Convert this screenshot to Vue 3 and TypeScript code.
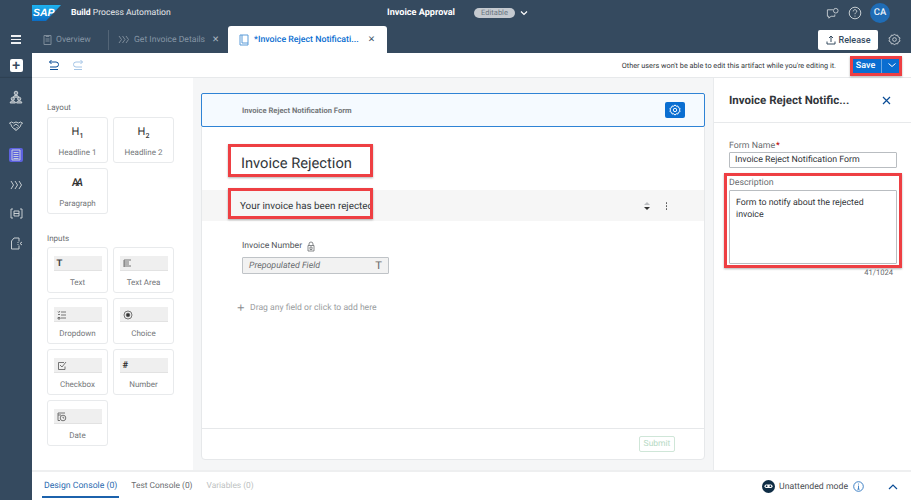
<script setup lang="ts">
interface PaletteItem {
  label: string;
  icon: string;
}

const layoutItems = ["Headline 1", "Headline 2", "Paragraph"];

const inputItems: PaletteItem[] = [
  { label: "Text", icon: "text" },
  { label: "Text Area", icon: "area" },
  { label: "Dropdown", icon: "list" },
  { label: "Choice", icon: "radio" },
  { label: "Checkbox", icon: "check" },
  { label: "Number", icon: "hash" },
  { label: "Date", icon: "date" },
];

// red annotation frames drawn on top of the screenshot
const marks = [
  { left: 850, top: 56, width: 52, height: 20 },
  { left: 228, top: 144, width: 145, height: 33 },
  { left: 228, top: 188, width: 145, height: 31 },
  { left: 724, top: 173, width: 178, height: 95 },
];
</script>

<template>
  <div class="page">
    <header class="shell">
      <div class="shell-top">
        <div class="logo">
          <svg width="30" height="16" viewBox="0 0 30 16">
            <defs>
              <linearGradient id="sapg" x1="0" y1="0" x2="0" y2="1">
                <stop offset="0" stop-color="#1eb3f0" />
                <stop offset="1" stop-color="#0a6cc4" />
              </linearGradient>
            </defs>
            <polygon points="0,0 29,0 14,16 0,16" fill="url(#sapg)" />
          </svg>
          <span class="logo-text">SAP</span>
        </div>
        <div class="product"><b>Build</b> Process Automation</div>
        <div class="project">
          <b>Invoice Approval</b>
          <span class="pill">Editable</span>
          <svg width="10" height="10" viewBox="0 0 10 10" class="caret"><path d="M2 3.5 5 6.5 8 3.5" /></svg>
        </div>
        <div class="shell-actions">
          <svg width="13" height="13" viewBox="0 0 14 14" class="line-icon">
            <path d="M7.5 3H1.5V10H3V12L5.5 10H9.5V8" />
            <circle cx="10.5" cy="4" r="2.5" />
          </svg>
          <svg width="14" height="14" viewBox="0 0 14 14" class="line-icon">
            <circle cx="7" cy="7" r="5.8" />
            <path d="M5.2 5.4C5.2 4.3 6 3.7 7 3.7S8.8 4.4 8.8 5.3C8.8 6.5 7 6.6 7 8.2M7 9.6V10.6" />
          </svg>
          <span class="avatar">CA</span>
        </div>
      </div>
      <div class="shell-tabs">
        <span class="hamburger"><i></i><i></i><i></i></span>
        <div class="tab muted first">
          <svg width="9" height="11" viewBox="0 0 9 11" class="tab-icon"><path d="M1 1.5H8V10.5H1ZM3 1V2.5H6V1M2.5 5H6.5M2.5 7H6.5" /></svg>
          Overview
        </div>
        <div class="tab muted second">
          <svg width="12" height="9" viewBox="0 0 12 9" class="tab-icon"><path d="M1 1 3.5 4.5 1 8M4.5 1 7 4.5 4.5 8M8 1 10.5 4.5 8 8" /></svg>
          Get Invoice Details
          <span class="tab-x">✕</span>
        </div>
        <div class="tab active">
          <svg width="10" height="12" viewBox="0 0 10 12" class="tab-icon blue"><path d="M1 1H9V11H1ZM3 1V9H9" /></svg>
          *Invoice Reject Notificati...
          <span class="tab-x">✕</span>
        </div>
        <button class="release">
          <svg width="10" height="10" viewBox="0 0 10 10" class="release-icon"><path d="M5 7V1M3 3 5 1 7 3M1 6.5V9H9V6.5" /></svg>
          Release
        </button>
        <svg width="13" height="13" viewBox="0 0 14 14" class="line-icon tabs-gear">
          <circle cx="7" cy="7" r="2" />
          <path d="M7 1 8.3 2.6 10.4 2.3 11 4.3 13 5.3 12.2 7 13 8.7 11 9.7 10.4 11.7 8.3 11.4 7 13 5.7 11.4 3.6 11.7 3 9.7 1 8.7 1.8 7 1 5.3 3 4.3 3.6 2.3 5.7 2.6Z" />
        </svg>
      </div>
    </header>

    <div class="body">
      <nav class="rail">
        <span class="plus">+</span>
        <div class="rail-icons">
          <svg width="14" height="14" viewBox="0 0 14 14" class="line-icon people">
            <circle cx="7" cy="3" r="1.8" />
            <path d="M4.5 7.2C4.5 5.8 5.5 5.4 7 5.4S9.5 5.8 9.5 7.2Z" />
            <circle cx="3.8" cy="8.8" r="1.6" />
            <circle cx="10.2" cy="8.8" r="1.6" />
            <path d="M1.2 13C1.2 11.4 2.2 11 3.8 11S6.4 11.4 6.4 13ZM7.6 13C7.6 11.4 8.6 11 10.2 11S12.8 11.4 12.8 13Z" />
          </svg>
          <svg width="16" height="12" viewBox="0 0 16 12" class="line-icon">
            <path d="M1 3.5 3.5 2 5.5 3 8 2 10.5 3 12.5 2 15 3.5M2.5 3.5 4 7 8 10.5 12 7 13.5 3.5M5.5 6 8 4 11 6.5M6.5 8 8 9.5M8.5 7 10 8.5" />
          </svg>
          <span class="rail-active">
            <svg width="10" height="12" viewBox="0 0 10 12" class="line-icon"><path d="M1 1H9V11H1ZM2.5 3.5H7.5M2.5 5.5H7.5M2.5 7.5H7.5M2.5 9.5H7.5" /></svg>
          </span>
          <svg width="13" height="10" viewBox="0 0 13 10" class="line-icon"><path d="M1 1 3.5 5 1 9M5 1 7.5 5 5 9M9 1 11.5 5 9 9" /></svg>
          <svg width="13" height="11" viewBox="0 0 13 11" class="line-icon"><path d="M3 1H1V10H3M10 1H12V10H10M4 3H9V8H4ZM4 5.5H9" /></svg>
          <svg width="13" height="13" viewBox="0 0 13 13" class="line-icon"><path d="M9 1H4L1.5 4V12H9V8.5M9 1V4.5M12 5 10 6.5 12 8M7.5 5.5H8.5M7.5 7.5H8.5" /></svg>
        </div>
      </nav>

      <div class="workspace">
        <div class="toolbar">
          <svg width="12" height="12" viewBox="0 0 12 12" class="undo"><path d="M3.5 1 1.5 3 3.5 5M1.5 3H8A2.5 2.5 0 0 1 8 8H2M2 10.5H10" /></svg>
          <svg width="12" height="12" viewBox="0 0 12 12" class="undo faded"><path d="M8.5 1 10.5 3 8.5 5M10.5 3H4A2.5 2.5 0 0 0 4 8H10M2 10.5H10" /></svg>
          <span class="notice">Other users won't be able to edit this artifact while you're editing it.</span>
          <div class="save">
            <span class="save-main">Save</span>
            <span class="save-menu">
              <svg width="10" height="10" viewBox="0 0 10 10"><path d="M1.5 3.5 5 6.5 8.5 3.5" /></svg>
            </span>
          </div>
        </div>

        <div class="editor">
          <aside class="palette">
            <div class="group-title">Layout</div>
            <div class="palette-grid">
              <div v-for="(item, i) in layoutItems" :key="item" class="palette-card">
                <div v-if="i < 2" class="heading-glyph">H<sub>{{ i + 1 }}</sub></div>
                <div v-else class="para-glyph">A<i>A</i></div>
                <span>{{ item }}</span>
              </div>
            </div>
            <div class="group-title inputs-title">Inputs</div>
            <div class="palette-grid">
              <div v-for="item in inputItems" :key="item.label" class="palette-card input-card">
                <div class="field-thumb">
                  <span v-if="item.icon === 'text'" class="thumb-t">T</span>
                  <svg v-else-if="item.icon === 'area'" width="9" height="9" viewBox="0 0 9 9" class="thumb-icon"><path d="M1 1H8M1 3H6M1 5H6M1 7H8M1 1V8" /></svg>
                  <svg v-else-if="item.icon === 'list'" width="10" height="10" viewBox="0 0 10 10" class="thumb-icon"><path d="M4 2H9M4 5H9M4 8H9M1 1.5 1.8 2.5 3 1M1 4.5H3M1 7.5H3V9H1Z" /></svg>
                  <svg v-else-if="item.icon === 'radio'" width="10" height="10" viewBox="0 0 10 10" class="thumb-icon"><circle cx="5" cy="5" r="4" /><circle cx="5" cy="5" r="1.8" fill="#333" /></svg>
                  <svg v-else-if="item.icon === 'check'" width="10" height="10" viewBox="0 0 10 10" class="thumb-icon"><path d="M8 5.5V8.5H1.5V1.5H7M3 4 5 6 9 1" /></svg>
                  <span v-else-if="item.icon === 'hash'" class="thumb-hash">#</span>
                  <svg v-else width="10" height="11" viewBox="0 0 10 11" class="thumb-icon"><path d="M1 2H8M1 2V9.5H3M1 4H4" /><circle cx="6" cy="7" r="2.8" /><path d="M6 5.7V7H7.2" /></svg>
                </div>
                <span>{{ item.label }}</span>
              </div>
            </div>
          </aside>

          <main class="canvas">
            <div class="form-card">
              <div class="form-head">
                <span>Invoice Reject Notification Form</span>
                <span class="gear-btn">
                  <svg width="12" height="12" viewBox="0 0 14 14">
                    <circle cx="7" cy="7" r="2" />
                    <path d="M7 1 8.3 2.6 10.4 2.3 11 4.3 13 5.3 12.2 7 13 8.7 11 9.7 10.4 11.7 8.3 11.4 7 13 5.7 11.4 3.6 11.7 3 9.7 1 8.7 1.8 7 1 5.3 3 4.3 3.6 2.3 5.7 2.6Z" />
                  </svg>
                </span>
              </div>
              <div class="form-body">
                <h1>Invoice Rejection</h1>
                <div class="para-row">
                  <span class="para-text">Your invoice has been rejected</span>
                  <span class="row-tools">
                    <span class="updown"><i class="up"></i><i class="down"></i></span>
                    <span class="dots"><i></i><i></i><i></i></span>
                  </span>
                </div>
                <div class="field">
                  <div class="field-label">
                    Invoice Number
                    <svg width="8" height="11" viewBox="0 0 8 11" class="lock"><path d="M2 4.5V3A2 2 0 0 1 6 3V4.5M1 4.5H7V10H1ZM3 6H5V8.5H3Z" /></svg>
                  </div>
                  <div class="prefill">
                    <em>Prepopulated Field</em>
                    <span class="prefill-t">T</span>
                  </div>
                </div>
                <div class="dropzone"><span class="dz-plus">+</span>Drag any field or click to add here</div>
              </div>
              <div class="form-foot"><span class="submit">Submit</span></div>
            </div>
          </main>

          <aside class="props">
            <div class="props-head">
              <span>Invoice Reject Notific...</span>
              <svg width="9" height="9" viewBox="0 0 9 9" class="close"><path d="M1 1 8 8M8 1 1 8" /></svg>
            </div>
            <div class="props-body">
              <label>Form Name<span class="req">*</span></label>
              <div class="text-input">Invoice Reject Notification Form</div>
              <label class="desc-label">Description</label>
              <div class="text-area">Form to notify about the rejected invoice</div>
              <div class="count">41/1024</div>
            </div>
          </aside>
        </div>

        <footer class="console">
          <span class="console-tab on">Design Console (0)</span>
          <span class="console-tab">Test Console (0)</span>
          <span class="console-tab off">Variables (0)</span>
          <div class="console-right">
            <svg width="13" height="13" viewBox="0 0 13 13" class="bot">
              <circle cx="6.5" cy="6.5" r="6.5" fill="#0f2d45" />
              <rect x="2.5" y="4.5" width="8" height="3.5" rx="1.7" fill="#fff" />
              <circle cx="4.6" cy="6.2" r="0.9" fill="#0f2d45" />
              <circle cx="8.4" cy="6.2" r="0.9" fill="#0f2d45" />
            </svg>
            <span>Unattended mode</span>
            <svg width="11" height="11" viewBox="0 0 11 11" class="info"><circle cx="5.5" cy="5.5" r="4.8" /><path d="M5.5 4.6V8.2M4.4 8.2H6.6M5.5 2.6V3.5" /></svg>
            <svg width="10" height="7" viewBox="0 0 10 7" class="chevron"><path d="M1 6 5 2 9 6" /></svg>
          </div>
        </footer>
      </div>
    </div>

    <div
      v-for="(m, i) in marks"
      :key="i"
      class="mark"
      :style="{ left: m.left + 'px', top: m.top + 'px', width: m.width + 'px', height: m.height + 'px' }"
    ></div>
  </div>
</template>

<style>
html,
body {
  margin: 0;
  overflow: hidden;
}
</style>

<style scoped>
.page {
  position: relative;
  width: 911px;
  height: 500px;
  overflow: hidden;
  display: flex;
  flex-direction: column;
  font-family: Roboto, "Liberation Sans", sans-serif;
  text-rendering: geometricPrecision;
  color: #32363a;
  background: #fff;
}

.shell {
  height: 53px;
  flex: none;
  background: #354a5f;
  color: #fff;
  display: flex;
  flex-direction: column;
}

.shell-top {
  height: 26px;
  display: flex;
  align-items: center;
  padding-left: 32px;
}

.logo {
  position: relative;
  width: 30px;
  height: 16px;
  margin-top: -1px;
}

.logo svg {
  display: block;
}

.logo-text {
  position: absolute;
  left: 1px;
  top: 2px;
  font: italic 700 10.5px/12px "Liberation Sans", sans-serif;
  color: #fff;
}

.product {
  margin-left: 9px;
  width: 316px;
  font-size: 8.6px;
  color: #e6e9ec;
}

.product b,
.project b {
  color: #fff;
}

.project {
  display: flex;
  align-items: center;
  font-size: 9.1px;
}

.pill {
  margin-left: 19px;
  width: 41px;
  height: 10px;
  border-radius: 5px;
  background: #c5cad0;
  color: #6a7681;
  font-size: 7.5px;
  line-height: 10px;
  text-align: center;
}

.caret {
  margin-left: 4px;
  fill: none;
  stroke: #fff;
  stroke-width: 1.2;
}

.shell-actions {
  margin-left: auto;
  margin-right: 21px;
  display: flex;
  align-items: center;
  gap: 9.5px;
}

.line-icon {
  fill: none;
  stroke: #d5dadd;
  stroke-width: 0.9;
}

.people {
  fill: rgba(213, 218, 221, 0.45);
}

.avatar {
  width: 20px;
  height: 20px;
  margin-left: -1.5px;
  border-radius: 50%;
  background: #1f6cb5;
  color: #e8f1f9;
  font-size: 9.5px;
  font-weight: 500;
  line-height: 20px;
  text-align: center;
}

.shell-tabs {
  flex: 1;
  display: flex;
  align-items: stretch;
  font-size: 8.6px;
  position: relative;
}

.hamburger {
  width: 32px;
  display: flex;
  flex-direction: column;
  justify-content: center;
  align-items: center;
  gap: 2px;
}

.hamburger i {
  display: block;
  width: 10px;
  height: 1.5px;
  background: #eef0f2;
}

.tab {
  display: flex;
  align-items: center;
}

.tab-icon {
  margin-right: 4px;
  fill: none;
  stroke: #7e8c9a;
  stroke-width: 1;
}

.tab-icon.blue {
  stroke: #5b9bd8;
  margin-right: 5px;
}

.muted {
  color: #8696a5;
}

.first {
  margin-left: 11px;
  width: 65px;
}

.second {
  width: 120px;
  box-sizing: border-box;
  padding-left: 10px;
  background: linear-gradient(#536577, #536577) left center / 1px 20px no-repeat;
}

.second .tab-x {
  margin-left: 7px;
  color: #a9b4bf;
}

.active {
  width: 159px;
  box-sizing: border-box;
  padding: 0 12px 0 11px;
  background: #fff;
  border-radius: 3px 3px 0 0;
  color: #0a6ed1;
  font-size: 8.8px;
  font-weight: 500;
}

.active .tab-x {
  margin-left: auto;
  color: #44566b;
}

.release {
  align-self: center;
  margin-left: auto;
  margin-right: 10px;
  width: 60px;
  height: 20px;
  padding: 0;
  border: 0;
  border-radius: 2px;
  background: #fff;
  color: #354a5f;
  font: 500 9px Roboto, sans-serif;
  display: flex;
  align-items: center;
  justify-content: center;
  gap: 3px;
}

.release-icon {
  fill: none;
  stroke: #354a5f;
  stroke-width: 1;
}

.tabs-gear {
  align-self: center;
  margin-right: 10px;
}

.body {
  flex: 1;
  display: flex;
  min-height: 0;
}

.rail {
  width: 32px;
  flex: none;
  background: #354a5f;
  display: flex;
  flex-direction: column;
  align-items: center;
}

.plus {
  margin-top: 6px;
  width: 13px;
  height: 13px;
  border-radius: 2px;
  background: #fff;
  color: #354a5f;
  font: 700 14px/13px "Liberation Sans", sans-serif;
  text-align: center;
}

.rail-icons {
  width: 100%;
  margin-top: 6px;
  padding-top: 4px;
  box-shadow: 0 -1px 1px rgba(0, 0, 0, 0.12);
  display: grid;
  grid-auto-rows: 29.3px;
  place-items: center;
}

.rail-active {
  width: 14px;
  height: 14px;
  border-radius: 2px;
  background: #5d62e0;
  display: flex;
  align-items: center;
  justify-content: center;
}

.workspace {
  flex: 1;
  min-width: 0;
  display: flex;
  flex-direction: column;
}

.toolbar {
  height: 25px;
  flex: none;
  box-sizing: border-box;
  border-bottom: 1px solid #e7e9eb;
  display: flex;
  align-items: center;
  padding: 0 9px 0 16px;
  font-size: 7.3px;
  color: #32363a;
}

.undo {
  fill: none;
  stroke: #0a4c96;
  stroke-width: 1;
  margin-right: 12px;
}

.undo.faded {
  stroke: #a5c5e6;
}

.notice {
  margin-left: auto;
  margin-right: 14px;
}

.save {
  width: 52px;
  height: 17px;
  display: flex;
  border-radius: 2px;
  overflow: hidden;
  background: #0a6ed1;
  color: #fff;
  font-size: 9px;
  font-weight: 500;
  line-height: 18px;
  text-align: center;
}

.save-main {
  width: 31px;
  border-right: 1px solid #6ba8e3;
}

.save-menu {
  flex: 1;
  display: flex;
  align-items: center;
  justify-content: center;
}

.save-menu svg {
  fill: none;
  stroke: #fff;
  stroke-width: 1;
}

.editor {
  flex: 1;
  min-height: 0;
  display: flex;
}

.palette {
  width: 161px;
  flex: none;
  box-sizing: border-box;
  padding: 25px 15px 0;
}

.group-title {
  font-size: 8px;
  line-height: 10px;
  color: #6a6d70;
  margin-bottom: 4px;
}

.inputs-title {
  margin-top: 20px;
  margin-bottom: 3px;
}

.palette-grid {
  display: grid;
  grid-template-columns: 61px 61px;
  gap: 5px;
  align-content: start;
}

.palette-card {
  height: 46px;
  box-sizing: border-box;
  border: 1px solid #e8eaec;
  border-radius: 3px;
  font-size: 8px;
  color: #74777a;
  text-align: center;
  display: flex;
  flex-direction: column;
  align-items: center;
  justify-content: flex-end;
  padding-bottom: 5px;
}

.input-card {
  justify-content: flex-start;
  padding-top: 8px;
}

.heading-glyph,
.para-glyph {
  height: 24px;
  color: #333;
  font-size: 11px;
  line-height: 17px;
  margin-bottom: 1px;
}

.heading-glyph sub {
  font-size: 7px;
  font-weight: 500;
  line-height: 0;
}

.para-glyph {
  font-weight: 500;
  letter-spacing: -3px;
  padding-right: 3px;
}

.field-thumb {
  width: 48px;
  height: 15px;
  margin-bottom: 7px;
  box-sizing: border-box;
  padding-left: 3px;
  background: #efefef;
  box-shadow: inset 0 -1px 0 #e2e2e2;
  display: flex;
  align-items: center;
  color: #333;
}

.thumb-t {
  font: 600 9.5px "Liberation Sans", sans-serif;
  color: #444;
}

.thumb-hash {
  font-size: 9.5px;
  font-weight: 700;
}

.thumb-icon {
  fill: none;
  stroke: #555;
  stroke-width: 0.8;
}

.canvas {
  flex: 1;
  min-width: 0;
  box-sizing: border-box;
  padding: 15px 8px 10px;
  background: #f5f6f7;
  border-right: 1px solid #e9ebed;
}

.form-card {
  height: 100%;
  box-sizing: border-box;
  background: #fff;
  border: 1px solid #e6e8ea;
  border-radius: 4px;
  display: flex;
  flex-direction: column;
}

.form-head {
  height: 34px;
  flex: none;
  margin: -1px -1px 0;
  box-sizing: border-box;
  border: 1.5px solid #2f83d5;
  border-radius: 2px;
  background: #f5faff;
  display: flex;
  align-items: center;
  justify-content: space-between;
  padding: 0 19px 0 40px;
  font-size: 7.6px;
  font-weight: 700;
  color: #74777a;
}

.gear-btn {
  width: 20px;
  height: 16px;
  border-radius: 2px;
  background: #0a6ed1;
  display: flex;
  align-items: center;
  justify-content: center;
}

.gear-btn svg {
  fill: none;
  stroke: #fff;
  stroke-width: 1.1;
}

.form-body {
  flex: 1;
  min-height: 0;
}

h1 {
  margin: 0;
  padding: 24px 0 0 39px;
  height: 63px;
  box-sizing: border-box;
  font-size: 14.7px;
  line-height: 24px;
  font-weight: 400;
  color: #32363a;
}

.para-row {
  height: 31px;
  box-sizing: border-box;
  padding: 1px 37px 0 38px;
  display: flex;
  align-items: center;
  justify-content: space-between;
  background: #f6f6f6;
  font-size: 9.85px;
}

.row-tools {
  display: flex;
  align-items: center;
  gap: 16px;
}

.updown {
  display: flex;
  flex-direction: column;
  gap: 2px;
}

.updown i {
  width: 0;
  height: 0;
  border-left: 3px solid transparent;
  border-right: 3px solid transparent;
}

.updown .up {
  border-bottom: 3px solid #b9bcbf;
}

.updown .down {
  border-top: 3px solid #333;
}

.dots {
  display: flex;
  flex-direction: column;
  gap: 1.5px;
}

.dots i {
  width: 1.5px;
  height: 1.5px;
  background: #555;
  border-radius: 50%;
}

.field {
  margin: 19px 0 0 40px;
}

.field-label {
  display: flex;
  align-items: center;
  gap: 5px;
  height: 12px;
  font-size: 8.6px;
  color: #53565a;
}

.lock {
  fill: none;
  stroke: #6a6d70;
  stroke-width: 0.8;
}

.prefill {
  width: 147px;
  height: 17px;
  margin-top: 5px;
  box-sizing: border-box;
  padding: 0 6px;
  background: #f2f2f2;
  border: 1px solid #bfc3c7;
  border-radius: 1px;
  display: flex;
  align-items: center;
  justify-content: space-between;
  font-size: 8.8px;
  color: #6a6d70;
}

.prefill-t {
  font: 400 11px "Liberation Sans", sans-serif;
  color: #666;
}

.dropzone {
  margin: 28px 0 0 35px;
  display: flex;
  align-items: center;
  font-size: 8.6px;
  color: #9a9da0;
}

.dz-plus {
  width: 13px;
  font: 400 13px/12px "Liberation Sans", sans-serif;
  color: #8a8d90;
}

.form-foot {
  height: 30px;
  flex: none;
  border-top: 1px solid #e6e8ea;
  display: flex;
  align-items: center;
  justify-content: flex-end;
  padding-right: 29px;
}

.submit {
  width: 36px;
  height: 16px;
  box-sizing: border-box;
  border: 1px solid #cfe6d8;
  border-radius: 2px;
  font-size: 8.5px;
  line-height: 14px;
  text-align: center;
  color: #b6d9c4;
}

.props {
  width: 197px;
  flex: none;
  box-sizing: border-box;
}

.props-head {
  height: 45px;
  box-sizing: border-box;
  border-bottom: 1px solid #e7e9eb;
  display: flex;
  align-items: center;
  padding: 0 20px 0 15px;
  justify-content: space-between;
  font-size: 11.5px;
  font-weight: 700;
  color: #32363a;
}

.close {
  fill: none;
  stroke: #0a4c96;
  stroke-width: 1.2;
}

.props-body {
  padding: 17px 14px 0 15px;
  font-size: 8.8px;
}

.props-body label {
  display: block;
  height: 12px;
  line-height: 12px;
  color: #6a6d70;
}

.req {
  color: #bb0000;
  margin-left: 1px;
}

.text-input,
.text-area {
  box-sizing: border-box;
  border: 1px solid #b9bdc1;
  border-radius: 1px;
  color: #32363a;
}

.text-input {
  height: 16px;
  padding: 0 5px;
  line-height: 15px;
}

.props-body .desc-label {
  margin-top: 9px;
}

.text-area {
  height: 74px;
  margin-top: 1px;
  padding: 6px;
  line-height: 12px;
}

.count {
  margin-top: 4px;
  padding-right: 4px;
  text-align: right;
  font-size: 7.6px;
  color: #6a6d70;
}

.console {
  height: 30px;
  flex: none;
  box-sizing: border-box;
  border-top: 2px solid #eeeff0;
  display: flex;
  align-items: stretch;
  padding: 0 11px 2px 10px;
  font-size: 8.4px;
}

.console-tab {
  padding: 0 2px;
  line-height: 28px;
  color: #6a6d70;
  margin-right: 10px;
}

.console-tab.on {
  font-size: 8.7px;
  color: #2d6cb0;
  border-bottom: 2px solid #1c62ac;
}

.console-tab.off {
  color: #bdbfc1;
}

.console-right {
  margin-left: auto;
  padding-top: 3px;
  display: flex;
  align-items: center;
  font-size: 8.7px;
  color: #4b4e52;
}

.bot {
  margin-right: 4px;
}

.info {
  margin-left: 5px;
  fill: none;
  stroke: #2d75bf;
  stroke-width: 0.9;
}

.chevron {
  margin-left: 24px;
  margin-right: 2px;
  fill: none;
  stroke: #0a4c96;
  stroke-width: 1.2;
}

.mark {
  position: absolute;
  box-sizing: border-box;
  border: 3px solid #ee3f43;
  box-shadow: 0 1px 2px rgba(0, 0, 0, 0.3);
  pointer-events: none;
}
</style>
